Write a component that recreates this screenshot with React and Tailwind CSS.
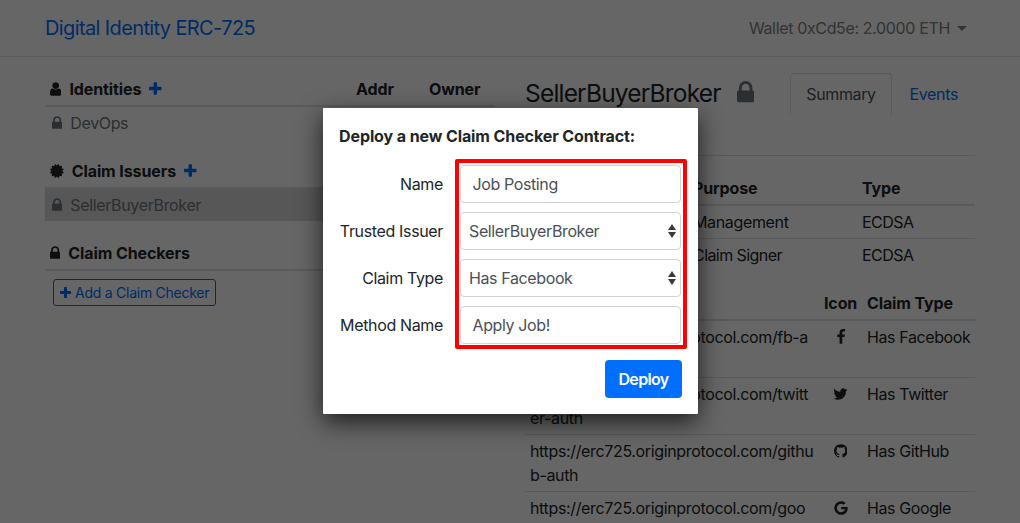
import React from "react";
import { FaGoogle } from "react-icons/fa";

const ICONS = {
  user: ["256 0 1280 1792", "M1536 1399q0 109-62.5 187t-150.5 78h-854q-88 0-150.5-78t-62.5-187q0-85 8.5-160.5t31.5-152 58.5-131 94-89 134.5-34.5q131 128 313 128t313-128q76 0 134.5 34.5t94 89 58.5 131 31.5 152 8.5 160.5zm-256-887q0 159-112.5 271.5t-271.5 112.5-271.5-112.5-112.5-271.5 112.5-271.5 271.5-112.5 271.5 112.5 112.5 271.5z"],
  lock: ["320 0 1152 1792", "M640 768h512v-192q0-106-75-181t-181-75-181 75-75 181v192zm832 96v576q0 40-28 68t-68 28h-960q-40 0-68-28t-28-68v-576q0-40 28-68t68-28h32v-192q0-184 132-316t316-132 316 132 132 316v192h32q40 0 68 28t28 68z"],
  plus: ["192 0 1408 1792", "M1600 736v192q0 40-28 68t-68 28h-416v416q0 40-28 68t-68 28h-192q-40 0-68-28t-28-68v-416h-416q-40 0-68-28t-28-68v-192q0-40 28-68t68-28h416v-416q0-40 28-68t68-28h192q40 0 68 28t28 68v416h416q40 0 68 28t28 68z"],
  certificate: ["128 0 1536 1792", "M1504 896l138 135q30 28 20 70-12 41-52 51l-188 48 53 186q12 41-19 70-29 31-70 19l-186-53-48 188q-10 40-51 52-12 2-19 2-31 0-51-22l-135-138-135 138q-28 30-70 20-41-11-51-52l-48-188-186 53q-41 12-70-19-31-29-19-70l53-186-188-48q-40-10-52-51-10-42 20-70l138-135-138-135q-30-28-20-70 12-41 52-51l188-48-53-186q-12-41 19-70 29-31 70-19l186 53 48-188q10-41 51-51 41-12 70 19l135 139 135-139q29-30 70-19 41 10 51 51l48 188 186-53q41-12 70 19 31 29 19 70l-53 186 188 48q40 10 52 51 10 42-20 70z"],
  facebook: ["448 0 896 1792", "M1343 12v264h-157q-86 0-116 36t-30 108v189h293l-39 296h-254v759h-306v-759h-255v-296h255v-218q0-186 104-288.5t277-102.5q147 0 228 12z"],
  twitter: ["64 0 1664 1792", "M1684 408q-67 98-162 167 1 14 1 42 0 130-38 259.5t-115.5 248.5-184.5 210.5-258 146-323 54.5q-271 0-496-145 35 4 78 4 225 0 401-138-105-2-188-64.5t-114-159.5q33 5 61 5 43 0 85-11-112-23-185.5-111.5t-73.5-205.5v-4q68 38 146 41-66-44-105-115t-39-154q0-88 44-163 121 149 294.5 238.5t371.5 99.5q-8-38-8-74 0-134 94.5-228.5t228.5-94.5q140 0 236 102 109-21 205-78-37 115-142 178 93-10 186-50z"],
  github: ["128 0 1536 1792", "M896 128q209 0 385.5 103t279.5 279.5 103 385.5q0 251-146.5 451.5t-378.5 277.5q-27 5-40-7t-13-30q0-3 .5-76.5t.5-134.5q0-97-52-142 57-6 102.5-18t94-39 81-66.5 53-105 20.5-150.5q0-119-79-206 37-91-8-204-28-9-81 11t-92 44l-38 24q-93-26-192-26t-192 26q-16-11-42.5-27t-83.5-38.5-85-13.5q-45 113-8 204-79 87-79 206 0 85 20.5 150t52.5 105 80.5 67 94 39 102.5 18q-39 36-49 103-21 10-45 15t-57 5-65.5-21.5-55.5-62.5q-19-32-48.5-52t-49.5-24l-20-3q-21 0-29 4.5t-5 11.5 9 14 13 12l7 5q22 10 43.5 38t31.5 51l10 23q13 38 44 61.5t67 30 69.5 7 55.5-3.5l23-4q0 38 .5 88.5t.5 54.5q0 18-13 30t-40 7q-232-77-378.5-277.5t-146.5-451.5q0-209 103-385.5t279.5-279.5 385.5-103z"],
};

function Icon({ name, className = "h-4" }) {
  const [viewBox, d] = ICONS[name];
  return (
    <svg viewBox={viewBox} fill="currentColor" className={`w-auto shrink-0 ${className}`}>
      <path d={d} />
    </svg>
  );
}

function Group({ icon, title, add, columns, children }) {
  return (
    <section className="h-[82px]">
      <div className="flex h-[34px] items-center border-b-2 border-[#dee2e6] pl-[5px] font-bold tracking-[-0.006em]">
        <Icon name={icon} />
        <span className="ml-2">{title}</span>
        {add && <Icon name="plus" className="ml-2 h-4 text-[#006eff]" />}
        {columns && (
          <div className="ml-auto flex">
            <span className="w-[73px]">Addr</span>
            <span className="w-[66px]">Owner</span>
          </div>
        )}
      </div>
      {children}
    </section>
  );
}

function Item({ active, children }) {
  return (
    <div className={`flex h-8 items-center gap-2 pl-[7px] tracking-[-0.022em] text-[#6c757d] ${active ? "bg-[#dadada]" : ""}`}>
      <Icon name="lock" />
      {children}
    </div>
  );
}

const claims = [
  ["fb-a", "uth", "facebook", "Has Facebook"],
  ["twitt", "er-auth", "twitter", "Has Twitter"],
  ["githu", "b-auth", "github", "Has GitHub"],
  ["goo", "gle-auth", "google", "Has Google"],
];

const fields = [
  ["Name", "Job Posting", false],
  ["Trusted Issuer", "SellerBuyerBroker", true],
  ["Claim Type", "Has Facebook", true],
  ["Method Name", "Apply Job!", false],
];

export default function App() {
  return (
    <div className="relative h-[523px] w-[1020px] overflow-hidden bg-white font-['Inter',sans-serif] text-[16px] leading-6 tracking-[-0.022em] whitespace-nowrap text-[#212529]">
      <header className="flex h-[57px] items-center justify-between border-b border-[#dee2e6] pr-[53px] pl-[45px]">
        <a className="text-[20px] tracking-[-0.031em] text-[#006eff]">Digital Identity ERC-725</a>
        <div className="flex items-center gap-[7px] tracking-[-0.022em] text-[#808080]">
          Wallet 0xCd5e: 2.0000 ETH
          <svg viewBox="0 0 10 5" className="h-[5px] w-[10px]" fill="currentColor"><path d="M0 0h10L5 5z" /></svg>
        </div>
      </header>

      <main className="flex gap-[30px] pt-4 pl-[45px]">
        <div className="w-[450px]">
          <Group icon="user" title="Identities" add columns>
            <Item>DevOps</Item>
          </Group>
          <Group icon="certificate" title="Claim Issuers" add>
            <Item active>SellerBuyerBroker</Item>
          </Group>
          <Group icon="lock" title="Claim Checkers">
            <button className="mt-2 ml-2 flex h-[27px] w-[163px] items-center gap-1 rounded-[3px] border border-[#006eff] pl-1.5 text-[14px] tracking-[-0.018em] text-[#006eff]">
              <Icon name="plus" className="h-3.5" />
              Add a Claim Checker
            </button>
          </Group>
        </div>

        <div className="w-[450px]">
          <div className="flex h-[83px] items-start border-b border-[#dee2e6]">
            <h3 className="mt-[3px] w-[212px] text-[24.5px] leading-[34px] tracking-[-0.033em]">SellerBuyerBroker</h3>
            <Icon name="lock" className="mt-[6px] h-[27px] text-[#6c757d]" />
            <nav className="ml-auto flex">
              <a className="flex h-[42px] w-[102px] items-center justify-center rounded-t border border-b-0 border-[#dee2e6] pb-px text-[#495057]">Summary</a>
              <a className="flex h-[42px] w-[83px] items-center pl-[17.5px] text-[#006eff]">Events</a>
            </nav>
          </div>

          <div className="mt-4 grid grid-cols-[168px_169px_113px]">
            <div className="col-span-3 grid h-[34px] grid-cols-subgrid items-center border-b-2 border-[#dee2e6] font-bold tracking-[-0.008em]">
              <span className="pl-[5px]">Key</span>
              <span>Purpose</span>
              <span>Type</span>
            </div>
            <div className="col-span-3 grid h-8 grid-cols-subgrid items-center">
              <span />
              <span>Management</span>
              <span className="tracking-[-0.035em]">ECDSA</span>
            </div>
            <div className="col-span-3 grid h-[33px] grid-cols-subgrid items-center border-t border-[#dee2e6]">
              <span />
              <span className="tracking-[-0.035em]">Claim Signer</span>
              <span className="tracking-[-0.035em]">ECDSA</span>
            </div>
          </div>

          <div className="mt-4">
            <div className="flex h-[34px] items-center border-b-2 border-[#dee2e6] font-bold tracking-[-0.008em]">
              <span className="w-[299px] pl-[5px]">Service</span>
              <span className="w-[43px]">Icon</span>
              <span>Claim Type</span>
            </div>
            {claims.map(([head, tail, icon, label], i) => (
              <div key={label} className={`flex pt-1 ${i ? "h-[57px] border-t border-[#dee2e6]" : "h-[56px]"}`}>
                <span className="w-[299px] pl-[5px] tracking-[-0.022em]">
                  https://erc725.originprotocol.com/{head}
                  <br />
                  {tail}
                </span>
                <span className="flex h-6 w-[33px] items-center justify-center">
                  {icon === "google" ? <FaGoogle className="h-[14px] w-[14px]" /> : <Icon name={icon} />}
                </span>
                <span className="pl-[10px] tracking-[-0.025em]">{label}</span>
              </div>
            ))}
          </div>
        </div>
      </main>

      <div className="absolute inset-0 bg-black/60 pt-[108px] pl-[323px]">
        <div className="relative h-[306px] w-[375px] rounded-[1px] bg-white px-4 pt-4 shadow-[0_8px_24px_rgba(0,0,0,0.7)]">
          <div className="font-bold tracking-[-0.006em]">Deploy a new Claim Checker Contract:</div>
          <div className="mt-[17px] flex flex-col gap-[9px]">
            {fields.map(([label, value, select]) => (
              <div key={label} className="flex h-[38px] items-center">
                <label className="w-[104px] text-right">{label}</label>
                <div className={`ml-[17px] flex h-[38px] w-[221px] items-center justify-between rounded border border-[#ced4da] pr-1 tracking-[-0.024em] text-[#495057] ${select ? "pl-2" : "pl-[11.5px]"}`}>
                  {value}
                  {select && (
                    <svg viewBox="0 0 8 14" className="h-[14px] w-2" fill="#343a40"><path d="M4 0 8 6H0zM0 8h8L4 14z" /></svg>
                  )}
                </div>
              </div>
            ))}
          </div>
          <button className="mt-4 ml-[266px] flex h-[38px] w-[77px] items-center justify-center rounded bg-[#006eff] font-semibold tracking-[-0.04em] text-white">Deploy</button>
          <div className="absolute top-[51px] left-[132px] h-[190px] w-[232px] rounded-[2px] border-4 border-[#ff0000]" />
        </div>
      </div>
    </div>
  );
}
